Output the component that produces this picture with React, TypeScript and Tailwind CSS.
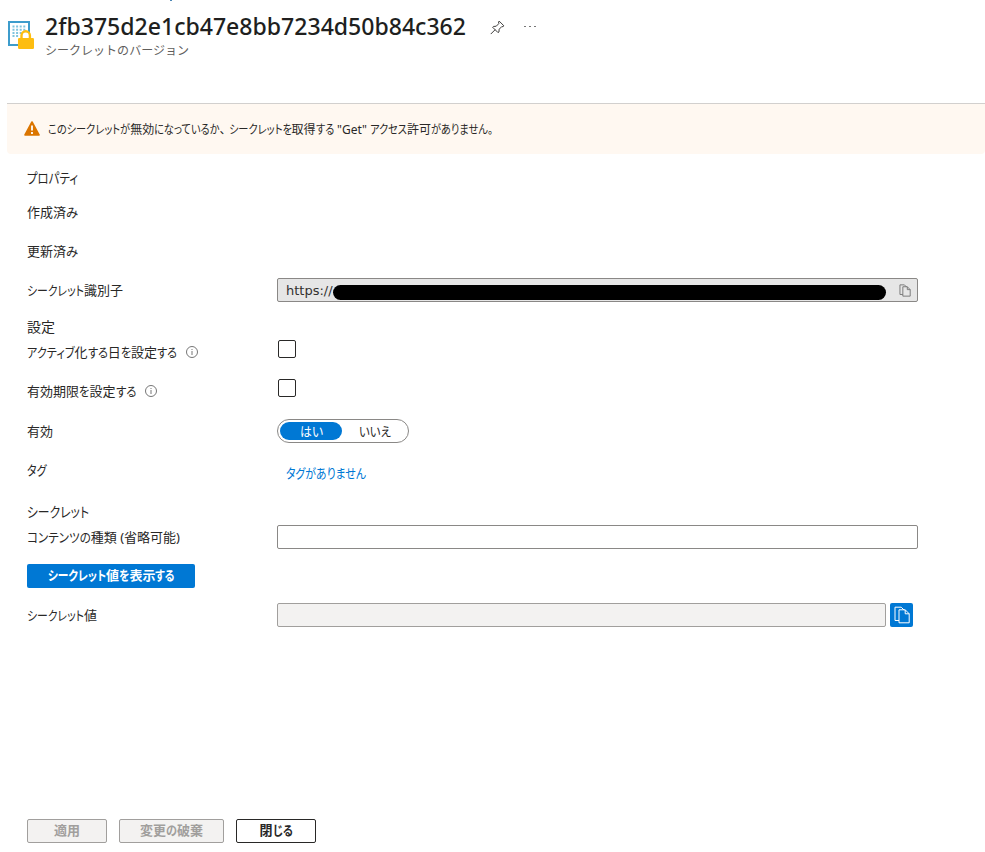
import { useLayoutEffect, useRef, type ReactNode } from "react";

const CopyIcon = ({ className, sw = 1 }: { className?: string; sw?: number }) => (
  <svg viewBox="0 0 16 18" className={className} fill="none" stroke="currentColor" strokeWidth={sw}>
    <path d="M5 14.5H1V1.2h6.2l3 3" />
    <path d="M5 3.800h6.200l4 4v9H5z" />
    <path d="M11.200 3.800v4h4" />
  </svg>
);

const InfoIcon = () => (
  <svg viewBox="0 0 12 12" className="ml-[9px] size-3 text-[#767676]" fill="none" stroke="currentColor">
    <circle cx="6" cy="6" r="5.500" />
    <path d="M6 5v4M6 3v1" />
  </svg>
);

const Row = ({ label, info, className, children }: { label: ReactNode; info?: boolean; className: string; children?: ReactNode }) => (
  <div className={`flex items-center pl-[27px] ${className}`}>
    <div className="flex w-[250px] shrink-0 items-center">
      {label}
      {info && <InfoIcon />}
    </div>
    {children}
  </div>
);

/* Sets kana in condensed form so that the whole text is w pixels wide; kanji keep their full width. */
const T = ({ children, w, all, className = "" }: { children: string; w: number; all?: boolean; className?: string }) => {
  const ref = useRef<HTMLSpanElement>(null);
  const runs = all ? [children] : children.split(/(、|[\u3002-\u30ff]+)/).filter(Boolean);
  useLayoutEffect(() => {
    const root = ref.current!;
    const kana = [...root.querySelectorAll<HTMLElement>("[data-kana]")];
    kana.forEach((k) => {
      k.style.transform = "";
      k.style.marginRight = "";
    });
    const widths = kana.map((k) => k.getBoundingClientRect().width);
    const sum = widths.reduce((a, b) => a + b, 0);
    if (!sum) return;
    const s = (w - (root.getBoundingClientRect().width - sum)) / sum;
    kana.forEach((k, i) => {
      k.style.transform = `scaleX(${s})`;
      k.style.marginRight = `${(s - 1) * widths[i]}px`;
    });
  }, [children, w]);
  return (
    <span ref={ref} className={`inline-block whitespace-pre ${className}`}>
      {runs.map((r, i) =>
        all || /[\u3002-\u30ff]/.test(r) ? (
          <span key={i} data-kana="" className="inline-block origin-left">{r}</span>
        ) : (
          <span key={i} className={r === "、" ? "mr-[3px]" : ""}>{r}</span>
        ),
      )}
    </span>
  );
};

export default function App() {
  return (
    <div className="flex h-[852px] w-[985px] flex-col overflow-hidden bg-white font-['Noto_Sans','Noto_Sans_CJK_JP',sans-serif] text-[13px] leading-5 text-[#292827] [font-feature-settings:'palt']">
      <div className="ml-[170px] h-px w-0.5 bg-[#4a86b5]" />
      <header className="flex h-[102px] pl-2">
        <svg viewBox="0 0 27 30" className="mt-[19px] h-[30px] w-[27px]">
          <rect x="1" y="2" width="20" height="23" fill="#fff" stroke="#3d9ccc" strokeWidth="2" />
          <g stroke="#7fc4de" strokeWidth="2" strokeDasharray="2 1.600">
            <path d="M4.500 6.500h13M4.500 9.700h13M4.500 12.900h13M4.500 16.100h7" />
          </g>
          <path d="M13.500 20v-4.500a4.200 4.200 0 0 1 8.400 0v4.500" fill="#fff" stroke="#fdbd10" strokeWidth="2.400" />
          <rect x="10" y="18" width="16" height="11" rx="1.200" fill="#fdbd10" />
        </svg>
        <div className="ml-2.5 flex flex-col">
          <h1 className="mt-[9px] flex h-8 items-center font-['Noto_Sans',sans-serif] text-2xl font-medium text-[#201f1e]"><T w={421} all>2fb375d2e1cb47e8bb7234d50b84c362</T></h1>
          <div className="mt-px flex h-4 items-center text-[12px] text-[#605e5c] [font-feature-settings:normal]"><T w={144} all>シークレットのバージョン</T></div>
        </div>
        <svg viewBox="0 0 16 16" className="mt-[19px] ml-6 size-[15px] text-[#323130]" fill="none" stroke="currentColor">
          <path d="M9.800 1.200l5 5-1 .9-1.200-.1-2.800 2.800-.3 3L8.600 13.500 2.800 7.700l.9-.8 3-.3L9.400 3.800 9.100 2z" />
          <path d="M5.500 10.300L.8 15" />
        </svg>
        <div className="mt-[25px] ml-[19px] flex gap-[3px]">
          <i className="h-px w-0.5 bg-[#777]" /><i className="h-px w-0.5 bg-[#777]" /><i className="h-px w-0.5 bg-[#777]" />
        </div>
      </header>
      <div className="ml-[7px] flex h-[51px] items-center rounded-b-sm border-t border-[#d2d0ce] bg-[#fff8f1] pl-[17px]">
        <svg viewBox="0 0 16 15" className="mb-0.5 h-[15px] w-4">
          <path d="M8 1L15 14H1z" fill="#db7500" stroke="#db7500" strokeWidth="1.600" strokeLinejoin="round" />
          <path d="M8 4.500v5M8 11v2" stroke="#fff" strokeWidth="1.800" />
        </svg>
        <div className="mt-0.5 ml-2 text-xs"><T w={445}>このシークレットが無効になっているか、シークレットを取得する "Get" アクセス許可がありません。</T></div>
      </div>
      <main className="flex flex-col pt-[14px]">
        <Row label={<T w={51}>プロパティ</T>} className="h-5 text-sm" />
        <Row label={<T w={51}>作成済み</T>} className="mt-[14px] h-5" />
        <Row label={<T w={51}>更新済み</T>} className="mt-[19px] h-5" />
        <Row label={<T w={96}>シークレット識別子</T>} className="mt-[17px] h-6">
          <div className="flex h-6 w-[641px] items-center rounded-xs border border-[#8a8886] bg-[#e6e6e6] pl-2">
            <span className="mt-px w-[47px] font-['DejaVu_Sans',sans-serif] text-[#323130]">https://</span>
            <div className="mt-1 h-[15px] w-[553px] shrink-0 rounded-full bg-black" />
            <CopyIcon className="ml-[13px] h-[13px] w-3 text-[#767676]" sw={1.3} />
          </div>
        </Row>
        <Row label={<T w={28}>設定</T>} className="mt-[15px] h-5 text-sm" />
        <Row label={<T w={150}>アクティブ化する日を設定する</T>} info className="mt-[5px] h-5">
          <div className="mb-[6px] ml-px size-[18px] rounded-xs border border-[#292827]" />
        </Row>
        <Row label={<T w={109}>有効期限を設定する</T>} info className="mt-[19px] h-5">
          <div className="mb-[6px] ml-px size-[18px] rounded-xs border border-[#292827]" />
        </Row>
        <Row label={<T w={26}>有効</T>} className="mt-[18px] h-6">
          <div className="flex h-6 w-[132px] items-center rounded-full border border-[#8a8886] p-0.5">
            <div className="flex h-[18px] w-[62px] items-center justify-center rounded-full bg-[#0078d4] text-white"><T w={23}>はい</T></div>
            <div className="flex flex-1 items-center justify-center pl-0.5"><T w={32}>いいえ</T></div>
          </div>
        </Row>
        <Row label={<T w={19.5}>タグ</T>} className="mt-[17px] h-5">
          <div className="mt-1.5 ml-[9px] text-[#0078d4]"><T w={80}>タグがありません</T></div>
        </Row>
        <Row label={<T w={62}>シークレット</T>} className="mt-[22px] h-5 text-sm" />
        <Row label={<T w={153}>コンテンツの種類 (省略可能)</T>} className="mt-[3px] h-6">
          <div className="h-6 w-[641px] rounded-xs border border-[#8a8886]" />
        </Row>
        <button className="mt-[15px] ml-[27px] flex h-6 w-[168px] items-center justify-center rounded-xs bg-[#0078d4] pb-0.5 pl-px font-bold text-white"><T w={127}>シークレット値を表示する</T></button>
        <Row label={<T w={70}>シークレット値</T>} className="mt-[15px] h-6">
          <div className="h-6 w-[609px] rounded-xs border border-[#a19f9d] bg-[#f3f2f1]" />
          <div className="ml-1 flex h-6 w-[23px] items-center justify-center rounded-xs bg-[#0078d4] text-white"><CopyIcon className="h-[18px] w-4" /></div>
        </Row>
      </main>
      <footer className="mt-auto mb-[9px] ml-[27px] flex gap-3 font-bold">
        <button className="flex h-6 w-20 items-center justify-center rounded-xs border border-[#a19f9d] bg-[#f3f2f1] pb-0.5 text-[#a19f9d]"><T w={26}>適用</T></button>
        <button className="flex h-6 w-[105px] items-center justify-center rounded-xs border border-[#a19f9d] bg-[#f3f2f1] pb-0.5 text-[#a19f9d]"><T w={63}>変更の破棄</T></button>
        <button className="flex h-6 w-20 items-center justify-center rounded-xs border border-[#292827] bg-white pb-0.5"><T w={33}>閉じる</T></button>
      </footer>
    </div>
  );
}
